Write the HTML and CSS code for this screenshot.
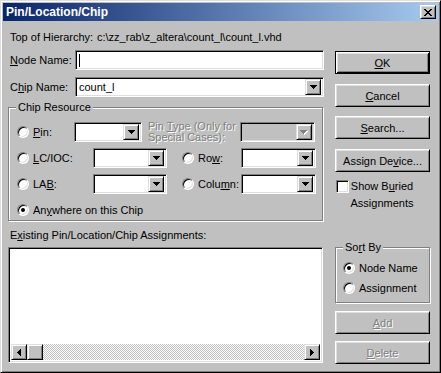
FILE: index.html
```html
<!DOCTYPE html>
<html lang="en">
<head>
  <meta charset="UTF-8" />
  <title>Pin/Location/Chip</title>
  <link rel="stylesheet" href="styles.css">
</head>
<body>
  <!-- arrow glyphs shared by combos and scrollbar -->
  <svg class="defs" width="0" height="0">
    <symbol id="dn" viewBox="0 0 7 4"><path d="M0 0h7v1h-1v1h-1v1h-1v1h-1v-1h-1v-1h-1v-1h-1z"/></symbol>
    <symbol id="dn-off" viewBox="0 0 8 5">
      <path fill="#fff" d="M1 1h7v1h-1v1h-1v1h-1v1h-1v-1h-1v-1h-1v-1h-1z"/>
      <path fill="#808080" d="M0 0h7v1h-1v1h-1v1h-1v1h-1v-1h-1v-1h-1v-1h-1z"/>
    </symbol>
    <symbol id="lt" viewBox="0 0 4 7"><path d="M3 0h1v7h-1v-1h-1v-1h-1v-1h-1v-1h1v-1h1v-1h1z"/></symbol>
    <symbol id="rt" viewBox="0 0 4 7"><path d="M0 0h1v1h1v1h1v1h1v1h-1v1h-1v1h-1v1h-1z"/></symbol>
  </svg>

  <div class="dialog">
    <div class="titlebar">
      <span class="title">Pin/Location/Chip</span>
      <span class="close">
        <svg width="8" height="7" viewBox="0 0 8 7"><path d="M0 0h2v1h-2zM6 0h2v1h-2zM1 1h2v1h-2zM5 1h2v1h-2zM2 2h4v1h-4zM3 3h2v1h-2zM2 4h4v1h-4zM1 5h2v1h-2zM5 5h2v1h-2zM0 6h2v1h-2zM6 6h2v1h-2z"/></svg>
      </span>
    </div>

    <div class="content">
      <div class="hierarchy">
        <span class="hier-label">Top of Hierarchy:</span>
        <span>c:\zz_rab\z_altera\count_l\count_l.vhd</span>
      </div>

      <div class="main">
        <div class="left">
          <div class="field-row">
            <span class="field-label"><u>N</u>ode Name:</span>
            <div class="sunken text-input"><span class="caret"></span></div>
          </div>
          <div class="field-row chip-row">
            <span class="field-label">C<u>h</u>ip Name:</span>
            <div class="sunken combo wide">
              <span class="value">count_l</span>
              <span class="drop"><svg width="7" height="4"><use href="#dn"/></svg></span>
            </div>
          </div>

          <fieldset class="group resource">
            <legend>Chip Resource</legend>
            <div class="res-rows">
              <div class="res-row">
                <span class="radio"></span>
                <span class="res-label pin-label"><u>P</u>in:</span>
                <div class="sunken combo pin-combo">
                  <span class="value"></span>
                  <span class="drop"><svg width="7" height="4"><use href="#dn"/></svg></span>
                </div>
                <span class="note">Pin <u>T</u>ype (Only for<br>Special Cases):</span>
                <div class="sunken combo side-combo disabled">
                  <span class="value"></span>
                  <span class="drop"><svg width="8" height="5"><use href="#dn-off"/></svg></span>
                </div>
              </div>
              <div class="res-row">
                <span class="radio"></span>
                <span class="res-label"><u>L</u>C/IOC:</span>
                <div class="sunken combo mid-combo">
                  <span class="value"></span>
                  <span class="drop"><svg width="7" height="4"><use href="#dn"/></svg></span>
                </div>
                <span class="radio side-radio"></span>
                <span class="res-label side-label">Ro<u>w</u>:</span>
                <div class="sunken combo side-combo">
                  <span class="value"></span>
                  <span class="drop"><svg width="7" height="4"><use href="#dn"/></svg></span>
                </div>
              </div>
              <div class="res-row">
                <span class="radio"></span>
                <span class="res-label">LA<u>B</u>:</span>
                <div class="sunken combo mid-combo">
                  <span class="value"></span>
                  <span class="drop"><svg width="7" height="4"><use href="#dn"/></svg></span>
                </div>
                <span class="radio side-radio"></span>
                <span class="res-label side-label">Colu<u>m</u>n:</span>
                <div class="sunken combo side-combo">
                  <span class="value"></span>
                  <span class="drop"><svg width="7" height="4"><use href="#dn"/></svg></span>
                </div>
              </div>
              <div class="res-row anywhere">
                <span class="radio on"></span>
                <span class="res-label">An<u>y</u>where on this Chip</span>
              </div>
            </div>
          </fieldset>

          <div class="list-label">E<u>x</u>isting Pin/Location/Chip Assignments:</div>
          <div class="sunken listbox">
            <div class="list-body"></div>
            <div class="hscroll">
              <span class="raised sbtn"><svg width="4" height="7"><use href="#lt"/></svg></span>
              <span class="raised thumb"></span>
              <span class="track"></span>
              <span class="raised sbtn"><svg width="4" height="7"><use href="#rt"/></svg></span>
            </div>
          </div>
        </div>

        <div class="right">
          <div class="btn default"><span><u>O</u>K</span></div>
          <div class="btn cancel"><span><u>C</u>ancel</span></div>
          <div class="btn search"><span><u>S</u>earch...</span></div>
          <div class="btn assign"><span>Assign De<u>v</u>ice...</span></div>
          <div class="check-row">
            <span class="checkbox"></span>
            <span class="check-label">Show B<u>u</u>ried<br>Assignments</span>
          </div>

          <fieldset class="group sort">
            <legend>So<u>r</u>t By</legend>
            <div class="sort-rows">
              <div class="sort-row"><span class="radio on"></span><span>Node Name</span></div>
              <div class="sort-row"><span class="radio"></span><span>Assignment</span></div>
            </div>
          </fieldset>

          <div class="btn off add"><span><u>A</u>dd</span></div>
          <div class="btn off delete"><span><u>D</u>elete</span></div>
        </div>
      </div>
    </div>
  </div>
</body>
</html>
```

FILE: styles.css
```css
:root {
  --face: #c0c0c0;
  --light: #dfdfdf;
  --shadow: #808080;
  --title-from: #0a246a;
  --title-to: #a6caf0;
}

* {
  box-sizing: border-box;
  margin: 0;
  padding: 0;
}

body {
  background: var(--face);
  font-family: "Liberation Sans", Arial, sans-serif;
  font-size: 11px;
  color: #000;
}

.defs {
  position: absolute;
}

u {
  text-decoration-thickness: 1px;
  text-underline-offset: 1px;
}

/* Window frame */
.dialog {
  width: 441px;
  height: 373px;
  background: var(--face);
  border: 1px solid;
  border-color: var(--light) #000 #000 var(--light);
  box-shadow: inset 1px 1px #fff, inset -1px -1px var(--shadow);
  padding: 2px;
}

.titlebar {
  height: 18px;
  display: flex;
  align-items: center;
  justify-content: space-between;
  padding: 0 2px 0 3px;
  background: linear-gradient(to right, var(--title-from), var(--title-to));
  color: #fff;
}

.title {
  font-weight: bold;
  font-size: 12px;
}

.close {
  width: 16px;
  height: 14px;
  display: flex;
  align-items: center;
  justify-content: center;
  background: var(--face);
  border: 1px solid;
  border-color: #fff #000 #000 #fff;
  box-shadow: inset 1px 1px var(--light), inset -1px -1px var(--shadow);
}

.content {
  padding: 0 8px 0 5px;
}

.hierarchy {
  margin-top: 10px;
  height: 13px;
  line-height: 13px;
  padding-left: 2px;
  display: flex;
}

.hier-label {
  width: 87px;
}

.main {
  margin-top: 6px;
  display: flex;
  gap: 11px;
}

.left {
  width: 316px;
}

.right {
  width: 95px;
  display: flex;
  flex-direction: column;
}

/* Sunken fields */
.sunken {
  background: #fff;
  border: 1px solid;
  border-color: var(--shadow) #fff #fff var(--shadow);
  box-shadow: inset 1px 1px #000, inset -1px -1px var(--light);
}

.raised {
  background: var(--face);
  border: 1px solid;
  border-color: var(--light) #000 #000 var(--light);
  box-shadow: inset 1px 1px #fff, inset -1px -1px var(--shadow);
  display: flex;
  align-items: center;
  justify-content: center;
}

.field-row {
  height: 20px;
  display: flex;
  align-items: center;
}

.chip-row {
  margin-top: 7px;
}

.field-label {
  width: 67px;
  padding-left: 2px;
}

.text-input {
  width: 249px;
  height: 20px;
  padding: 3px 0 0 3px;
}

.caret {
  display: block;
  width: 1px;
  height: 13px;
  background: #000;
}

.combo {
  height: 20px;
  display: flex;
  align-items: center;
  padding: 2px;
}

.combo .value {
  flex: 1;
  padding-left: 1px;
}

.combo.wide {
  width: 249px;
}

.combo.disabled {
  background: var(--face);
}

.drop {
  width: 16px;
  height: 16px;
  background: var(--face);
  border: 1px solid;
  border-color: var(--light) #000 #000 var(--light);
  box-shadow: inset 1px 1px #fff, inset -1px -1px var(--shadow);
  display: flex;
  align-items: center;
  justify-content: center;
}

.drop svg,
.sbtn svg {
  display: block;
}

/* Group boxes */
.group {
  border: 1px solid var(--shadow);
  box-shadow: inset 1px 1px #fff, 1px 1px #fff;
  min-inline-size: 0;
}

.group legend {
  margin-left: 7px;
  padding: 0 2px;
  line-height: 13px;
  background: var(--face);
}

.resource {
  margin-top: 4px;
  height: 120px;
  width: 315px;
}

.res-rows {
  padding: 8px 0 0 8px;
  display: flex;
  flex-direction: column;
  gap: 6px;
}

.res-row {
  height: 20px;
  display: flex;
  align-items: center;
}

.res-row.anywhere {
  height: 14px;
  margin-top: 3px;
}

.radio {
  flex: none;
  width: 12px;
  height: 12px;
  border-radius: 50%;
  background: #fff;
  border: 1px solid;
  border-color: var(--shadow) #fff #fff var(--shadow);
  box-shadow: inset 1px 1px #000, inset -1px -1px var(--light);
  display: flex;
  align-items: center;
  justify-content: center;
}

.radio.on::after {
  content: "";
  width: 4px;
  height: 4px;
  border-radius: 50%;
  background: #000;
}

.res-label {
  margin-left: 4px;
  width: 60px;
}

.res-row.anywhere .res-label {
  width: auto;
}

.res-label.pin-label {
  width: 41px;
}

.pin-combo {
  width: 68px;
}

.mid-combo {
  width: 74px;
}

.side-combo {
  width: 75px;
}

.note {
  width: 92px;
  margin-left: 6px;
  line-height: 11px;
  color: var(--shadow);
  text-shadow: 1px 1px #fff;
  white-space: nowrap;
}

.side-radio {
  margin-left: 15px;
}

.res-label.side-label {
  width: 43px;
}

/* List */
.list-label {
  margin-top: 8px;
  padding-left: 2px;
  line-height: 13px;
}

.listbox {
  margin-top: 5px;
  width: 315px;
  height: 116px;
  padding: 2px;
  display: flex;
  flex-direction: column;
}

.list-body {
  flex: 1;
}

.hscroll {
  height: 16px;
  display: flex;
}

.sbtn,
.thumb {
  width: 16px;
  height: 16px;
}

.track {
  flex: 1;
  background: repeating-conic-gradient(var(--face) 0 25%, #fff 0 50%) 0 0 / 2px 2px;
}

/* Buttons */
.btn {
  height: 23px;
  display: flex;
  align-items: center;
  justify-content: center;
  background: var(--face);
  border: 1px solid;
  border-color: #fff #000 #000 #fff;
  box-shadow: inset 1px 1px var(--light), inset -1px -1px var(--shadow);
}

.btn.default {
  margin-top: 1px;
  border-color: #000;
  box-shadow: inset 1px 1px #fff, inset -1px -1px #000, inset 2px 2px var(--light), inset -2px -2px var(--shadow);
}

.btn.cancel {
  margin-top: 10px;
}

.btn.search {
  margin-top: 9px;
}

.btn.assign {
  margin-top: 10px;
}

.btn.off {
  color: var(--shadow);
  text-shadow: 1px 1px #fff;
}

.btn.add {
  margin-top: 8px;
}

.btn.delete {
  margin-top: 7px;
}

.check-row {
  margin-top: 6px;
  display: flex;
  align-items: flex-start;
}

.checkbox {
  flex: none;
  margin: 2px 0 0 1px;
  width: 13px;
  height: 13px;
  background: #fff;
  border: 1px solid;
  border-color: var(--shadow) #fff #fff var(--shadow);
  box-shadow: inset 1px 1px #000, inset -1px -1px var(--light);
}

.check-label {
  margin-left: 1px;
  width: 64px;
  line-height: 17px;
  text-align: center;
  white-space: nowrap;
}

.sort {
  margin-top: 29px;
  height: 62px;
}

.sort-rows {
  padding: 6px 0 0 7px;
  display: flex;
  flex-direction: column;
  gap: 4px;
}

.sort-row {
  height: 16px;
  display: flex;
  align-items: center;
  gap: 4px;
}
```
